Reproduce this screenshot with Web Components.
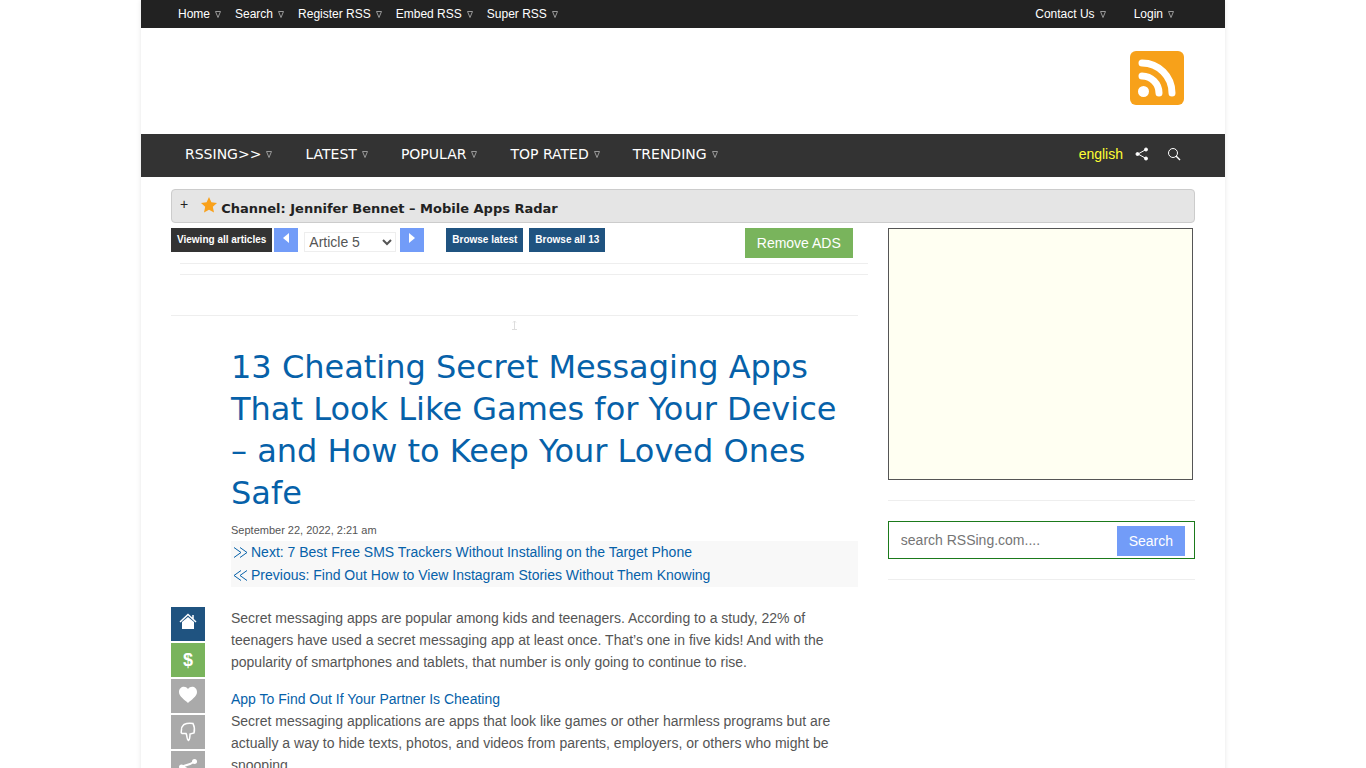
<!DOCTYPE html>
<html lang="en">
<head>
<meta charset="utf-8">
<meta name="viewport" content="width=device-width, initial-scale=1">
<title>13 Cheating Secret Messaging Apps That Look Like Games</title>
<style>
  html {
    scrollbar-width: none;
  }
  body {
    margin: 0;
    background: #fff;
    color: #555;
    font: 14px/22px "Liberation Sans", Arial, sans-serif;
    --display: "DejaVu Sans", Verdana, sans-serif;
    --link: #0661a9;
    --blue: #1f5380;
    --sky: #729cf8;
    --green: #79b45c;
    --line: #eee;
  }
</style>
</head>
<body>
<rss-page>
  <top-bar slot="top">
    <menu-link>Home</menu-link>
    <menu-link>Search</menu-link>
    <menu-link>Register RSS</menu-link>
    <menu-link>Embed RSS</menu-link>
    <menu-link>Super RSS</menu-link>
    <menu-link slot="end">Contact Us</menu-link>
    <menu-link slot="end">Login</menu-link>
  </top-bar>
  <site-logo slot="top"></site-logo>
  <main-nav slot="top">
    <menu-link>RSSING&gt;&gt;</menu-link>
    <menu-link>LATEST</menu-link>
    <menu-link>POPULAR</menu-link>
    <menu-link>TOP RATED</menu-link>
    <menu-link>TRENDING</menu-link>
  </main-nav>
  <channel-bar slot="channel">Channel: Jennifer Bennet – Mobile Apps Radar</channel-bar>
  <article-pager></article-pager>
  <article-post>
    <share-rail slot="rail"></share-rail>
    <span slot="title">13 Cheating Secret Messaging Apps That Look Like Games for Your Device – and How to Keep Your Loved Ones Safe</span>
    <span slot="date">September 22, 2022, 2:21 am</span>
    <span slot="next">Next: 7 Best Free SMS Trackers Without Installing on the Target Phone</span>
    <span slot="previous">Previous: Find Out How to View Instagram Stories Without Them Knowing</span>
    <post-text>Secret messaging apps are popular among kids and teenagers. According to a study, 22% of teenagers have used a secret messaging app at least once. That’s one in five kids! And with the popularity of smartphones and tablets, that number is only going to continue to rise.</post-text>
    <post-text heading="App To Find Out If Your Partner Is Cheating">Secret messaging applications are apps that look like games or other harmless programs but are actually a way to hide texts, photos, and videos from parents, employers, or others who might be snooping.</post-text>
  </article-post>
  <ad-box slot="side"></ad-box>
  <search-box slot="side"></search-box>
</rss-page>

<script>
class BaseElement extends HTMLElement {
  constructor() {
    super();
    this.attachShadow({ mode: "open" });
    this.shadowRoot.innerHTML = this.template();
  }

  template() {
    return "<slot></slot>";
  }
}

class RssPage extends BaseElement {
  template() {
    return `
      <style>
        :host {
          display: block;
          max-width: 1084px;
          min-height: 100vh;
          margin: 0 auto;
          background: #fff;
          box-shadow: 0 0 5px rgba(0,0,0,0.1);
        }
        main {
          padding: 12px 30px 0;
        }
        .columns {
          display: flex;
          gap: 30px;
          margin-top: 5px;
        }
        .content {
          flex: 1;
          min-width: 0;
        }
        aside {
          flex: 0 0 30%;
        }
      </style>
      <header><slot name="top"></slot></header>
      <main>
        <slot name="channel"></slot>
        <div class="columns">
          <div class="content"><slot></slot></div>
          <aside><slot name="side"></slot></aside>
        </div>
      </main>
    `;
  }
}

class MenuLink extends BaseElement {
  template() {
    return `
      <style>
        :host {
          display: block;
        }
        a {
          display: flex;
          align-items: center;
          gap: 5px;
          color: #fff;
          text-decoration: none;
        }
        svg {
          width: 6px;
          height: 7px;
          fill: none;
          stroke: #999;
        }
      </style>
      <a href="#"><slot></slot><svg viewBox="0 0 6 7"><path d="M.5.5h5L3 6.500z"/></svg></a>
    `;
  }
}

class TopBar extends BaseElement {
  template() {
    return `
      <style>
        :host {
          display: flex;
          justify-content: space-between;
          padding: 0 51px 0 37px;
          background: #222;
          font-size: 12px;
          line-height: 28px;
        }
        nav {
          display: flex;
          gap: 14px;
        }
        .end {
          gap: 28px;
        }
      </style>
      <nav><slot></slot></nav>
      <nav class="end"><slot name="end"></slot></nav>
    `;
  }
}

class SiteLogo extends BaseElement {
  template() {
    return `
      <style>
        :host {
          display: flex;
          justify-content: flex-end;
          padding: 23px 41px 29px;
        }
        a, svg {
          display: block;
        }
      </style>
      <a href="#" aria-label="RSSing home">
        <svg width="54" height="54" viewBox="0 0 54 54">
          <rect width="54" height="54" rx="6" fill="#f7a11a"/>
          <circle cx="13.500" cy="40.500" r="5.500" fill="#fff"/>
          <path d="M12 25a17 17 0 0 1 17 17M12 12a30 30 0 0 1 30 30" fill="none" stroke="#fff" stroke-width="7" stroke-linecap="round"/>
        </svg>
      </a>
    `;
  }
}

class MainNav extends BaseElement {
  template() {
    return `
      <style>
        :host {
          display: flex;
          justify-content: space-between;
          align-items: flex-start;
          padding: 0 44px 3px;
          background: #333;
          font: 14px/40px var(--display);
        }
        nav {
          display: flex;
          gap: 33px;
        }
        .tools {
          display: flex;
          align-items: center;
          gap: 12px;
          font: 14px/42px "Liberation Sans", Arial, sans-serif;
          height: 40px;
        }
        .tools a {
          color: #ff3;
          text-decoration: none;
        }
        button {
          display: flex;
          padding: 0;
          border: 0;
          background: none;
        }
        button + button {
          margin-left: 6px;
        }
      </style>
      <nav><slot></slot></nav>
      <div class="tools">
        <a href="#">english</a>
        <button aria-label="Share">
          <svg width="14" height="14" viewBox="0 0 14 14" fill="#fff" stroke="#fff"><path d="M11 2.500 3 7l8 4.500" fill="none"/><circle cx="11" cy="2.500" r="1.500"/><circle cx="2.500" cy="7" r="1.500"/><circle cx="11" cy="11.500" r="1.500"/></svg>
        </button>
        <button aria-label="Search">
          <svg width="14" height="14" viewBox="0 0 14 14" fill="none" stroke="#fff"><circle cx="6" cy="6" r="4.500"/><path d="m9 9 4 4" stroke-width="1.500"/></svg>
        </button>
      </div>
    `;
  }
}

class ChannelBar extends BaseElement {
  template() {
    return `
      <style>
        :host {
          display: flex;
          box-sizing: border-box;
          height: 34px;
          padding: 0 8px;
          border: 1px solid #ccc;
          border-radius: 4px;
          background: #e5e5e5;
          color: #222;
        }
        button {
          padding: 0;
          border: 0;
          background: none;
          color: #222;
          font: 14px/28px "Liberation Sans", Arial, sans-serif;
          align-self: flex-start;
        }
        svg {
          margin: 7px 4px 0 13px;
        }
        h2 {
          margin: 0;
          font: bold 13px/38px var(--display);
        }
      </style>
      <button aria-label="Expand channel">+</button>
      <svg width="16" height="16" viewBox="0 0 16 16" fill="#f9a11b"><path d="m8 0 2.400 5.300 5.600.6-4.200 3.900 1.200 5.800L8 12.700l-5 2.900 1.200-5.800L0 5.900l5.600-.6z"/></svg>
      <h2><slot></slot></h2>
    `;
  }
}

class ArticlePager extends BaseElement {
  template() {
    return `
      <style>
        :host {
          display: block;
        }
        .row {
          display: flex;
          align-items: flex-start;
          height: 35px;
        }
        .tag {
          padding: 0 6px;
          background: var(--blue);
          color: #fff;
          font: bold 10px/24px "Liberation Sans", Arial, sans-serif;
          text-decoration: none;
        }
        .dark {
          background: #333;
        }
        .arrow {
          display: flex;
          justify-content: center;
          width: 24px;
          height: 24px;
          margin-left: 2px;
          padding: 5px 0 0;
          border: 0;
          background: var(--sky);
        }
        select {
          width: 92px;
          height: 20px;
          margin: 4px 2px 0 6px;
          padding: 0;
          border: 1px solid #eee;
          background: #fff;
          color: #555;
          font: 14px/18px "Liberation Sans", Arial, sans-serif;
        }
        .latest {
          margin: 0 6px 0 22px;
        }
        .remove {
          margin: 0 5px 0 auto;
          padding: 0 12px;
          border: 0;
          background: var(--green);
          color: #fff;
          font: 14px/30px "Liberation Sans", Arial, sans-serif;
        }
        hr {
          margin: 0;
          border: 0;
          border-top: 1px solid var(--line);
        }
        .wide {
          height: 10px;
          margin: 0 -10px 0 9px;
        }
        .last {
          margin-top: 30px;
        }
      </style>
      <div class="row">
        <a class="tag dark" href="#">Viewing all articles</a>
        <button class="arrow" aria-label="Previous article"><svg width="6" height="10" viewBox="0 0 6 10" fill="#fff"><path d="M6 0v10L0 5z"/></svg></button>
        <select aria-label="Article"><option>Article 5</option></select>
        <button class="arrow" aria-label="Next article"><svg width="6" height="10" viewBox="0 0 6 10" fill="#fff"><path d="M0 0v10l6-5z"/></svg></button>
        <a class="tag latest" href="#">Browse latest</a>
        <a class="tag" href="#">Browse all 13</a>
        <button class="remove">Remove ADS</button>
      </div>
      <hr class="wide">
      <hr class="wide">
      <hr class="last">
    `;
  }
}

class ArticlePost extends BaseElement {
  template() {
    return `
      <style>
        :host {
          display: block;
        }
        .mark {
          display: flex;
          justify-content: center;
          padding: 4px 0 15px;
        }
        .mark svg {
          stroke: #ddd;
        }
        .body {
          display: grid;
          grid-template-columns: 34px 1fr;
          column-gap: 26px;
        }
        .intro {
          grid-column: 2;
        }
        h1 {
          margin: 0;
          font: 32px/42px var(--display);
        }
        a {
          color: var(--link);
          text-decoration: none;
        }
        .date {
          font-size: 11px;
          line-height: 18px;
          margin-top: 7px;
        }
        .links {
          margin: 2px 0 20px;
          background: #f8f8f8;
        }
        .links a {
          display: flex;
          align-items: center;
          gap: 3px;
          padding-left: 2px;
          line-height: 23px;
        }
        svg {
          fill: none;
          stroke: var(--link);
        }
      </style>
      <div class="mark"><svg width="7" height="11" viewBox="0 0 7 11"><path d="M3.500 1v8M2 2.500 3.500 1 5 2.500M1 9.500h5"/></svg></div>
      <div class="body">
        <div class="intro">
          <h1><a href="#"><slot name="title"></slot></a></h1>
          <div class="date"><slot name="date"></slot></div>
          <div class="links">
            <a href="#"><svg width="15" height="11" viewBox="0 0 15 11"><path d="m1 .5 7 5-7 5M7 .5l7 5-7 5"/></svg><slot name="next"></slot></a>
            <a href="#"><svg width="15" height="11" viewBox="0 0 15 11"><path d="m8 .5-7 5 7 5M14 .5l-7 5 7 5"/></svg><slot name="previous"></slot></a>
          </div>
        </div>
        <slot name="rail"></slot>
        <div><slot></slot></div>
      </div>
    `;
  }
}

class PostText extends BaseElement {
  template() {
    return `
      <style>
        :host {
          display: block;
          margin-bottom: 15px;
        }
        a {
          display: block;
          color: var(--link);
          text-decoration: none;
        }
      </style>
      <a href="#"></a>
      <slot></slot>
    `;
  }

  connectedCallback() {
    const link = this.shadowRoot.querySelector("a");
    if (this.hasAttribute("heading")) {
      link.textContent = this.getAttribute("heading");
    } else {
      link.remove();
    }
  }
}

class ShareRail extends BaseElement {
  template() {
    return `
      <style>
        :host {
          display: flex;
          flex-direction: column;
          gap: 2px;
        }
        button {
          display: flex;
          justify-content: center;
          width: 34px;
          height: 34px;
          padding: 6px 0 0;
          border: 0;
          background: #aaa;
          color: #fff;
          font: bold 18px/22px "Liberation Sans", Arial, sans-serif;
        }
        .home {
          background: var(--blue);
        }
        .money {
          background: var(--green);
        }
      </style>
      <button class="home" aria-label="Home"><svg width="18" height="18" viewBox="0 0 18 18"><path d="M3 9v7h12V9L9 4z" fill="#fff"/><path d="m1 9 8-7.500L17 9M14 2v4" fill="none" stroke="#fff" stroke-width="1.500"/></svg></button>
      <button class="money">$</button>
      <button aria-label="Like"><svg width="20" height="20" viewBox="0 0 20 20"><path d="M10 18C7 15 1 11.500 1 7c0-5 6-7 9-3 3-4 9-2 9 3 0 4.500-6 8-9 11z" fill="#fff"/></svg></button>
      <button aria-label="Dislike"><svg width="18" height="22" viewBox="0 0 18 22"><path d="M5 3.500C8 2 11 2 14 2.500c1.500 3 2 6 1 9.500l-4 1c0 2 0 5-1.500 6.500C7.500 19 8.500 15 7 12.500H3C1 11 3 9 2.500 8 2 6 4 5 5 3.500z" fill="none" stroke="#fff" stroke-width="1.500"/></svg></button>
      <button aria-label="Share"><svg width="20" height="20" viewBox="0 0 20 20" fill="#fff"><path d="M16.500 4.500 12 7l-8 2.500 12 6" fill="none" stroke="#fff" stroke-width="2"/><circle cx="16.500" cy="4.500" r="2.500"/><circle cx="3.500" cy="10" r="2.500"/><circle cx="16" cy="15.500" r="2.500"/></svg></button>
    `;
  }
}

class AdBox extends BaseElement {
  template() {
    return `
      <style>
        :host {
          display: block;
          height: 250px;
          margin: 0 2px 20px 0;
          border: 1px solid #555;
          background: #fffff2;
        }
      </style>
    `;
  }
}

class SearchBox extends BaseElement {
  template() {
    return `
      <style>
        :host {
          display: block;
          padding: 20px 0;
          border: solid var(--line);
          border-width: 1px 0;
        }
        form {
          display: flex;
          padding: 4px 9px 2px 0;
          border: 1px solid #1b7a1b;
        }
        input {
          flex: 1;
          min-width: 0;
          height: 28px;
          padding: 0 12px;
          border: 0;
          outline: 0;
          font: 14px/28px "Liberation Sans", Arial, sans-serif;
        }
        button {
          padding: 0 12px;
          border: 0;
          background: var(--sky);
          color: #fff;
          font: 14px/30px "Liberation Sans", Arial, sans-serif;
        }
      </style>
      <form>
        <input type="text" aria-label="Search RSSing.com" placeholder="search RSSing.com....">
        <button type="button">Search</button>
      </form>
    `;
  }
}

customElements.define("rss-page", RssPage);
customElements.define("menu-link", MenuLink);
customElements.define("top-bar", TopBar);
customElements.define("site-logo", SiteLogo);
customElements.define("main-nav", MainNav);
customElements.define("channel-bar", ChannelBar);
customElements.define("article-pager", ArticlePager);
customElements.define("article-post", ArticlePost);
customElements.define("post-text", PostText);
customElements.define("share-rail", ShareRail);
customElements.define("ad-box", AdBox);
customElements.define("search-box", SearchBox);
</script>
</body>
</html>
